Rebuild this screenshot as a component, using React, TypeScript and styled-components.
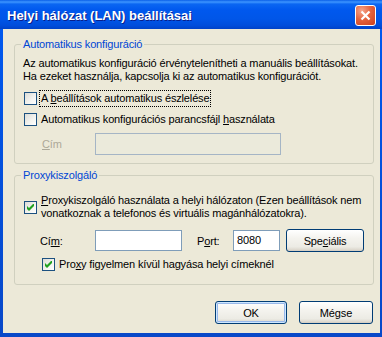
import styled, { createGlobalStyle } from 'styled-components';

const GlobalStyle = createGlobalStyle`
  html, body {
    margin: 0;
    padding: 0;
    background: #ffffff;
  }
  body {
    font-family: 'Liberation Sans', Arial, sans-serif;
    font-size: 11px;
    letter-spacing: -0.15px;
    color: #000000;
  }
`;

const Window = styled.div`
  width: 382px;
  height: 337px;
  display: flex;
  flex-direction: column;
  background: #0a4fd9;
`;

const TitleBar = styled.div`
  height: 29px;
  flex: none;
  display: flex;
  align-items: center;
  justify-content: space-between;
  padding: 0 6px 0 7px;
  box-sizing: border-box;
  background: linear-gradient(
    to bottom,
    #0a5fe8 0%,
    #3d95ff 7%,
    #0a66f2 14%,
    #0058ee 35%,
    #0056e8 65%,
    #004ddb 88%,
    #0042c8 100%
  );
`;

const Title = styled.span`
  font-family: 'Liberation Sans', Arial, sans-serif;
  font-weight: 700;
  font-size: 13px;
  letter-spacing: 0;
  color: #ffffff;
  text-shadow: 1px 1px 0 #0a1e8a;
  margin-top: 1px;
`;

const CloseButton = styled.div`
  width: 21px;
  height: 21px;
  box-sizing: border-box;
  border: 1px solid #ffffff;
  border-radius: 3px;
  background: radial-gradient(
    circle at 30% 25%,
    #f6a58c 0%,
    #e5643f 45%,
    #cc3f1c 100%
  );
  display: flex;
  align-items: center;
  justify-content: center;
  margin-top: 1px;
`;

const Frame = styled.div`
  flex: 1;
  display: flex;
  padding: 0 2px 4px 3px;
  background: linear-gradient(to bottom, #0058ee, #0848c8);
`;

const Client = styled.div`
  flex: 1;
  background: #ece9d8;
  padding: 9px 6px 0 11px;
  display: flex;
  flex-direction: column;
`;

const Group = styled.fieldset<{ $bottom: number; $top: number }>`
  margin: ${(p) => p.$top}px 0 0 0;
  padding: 0 0 ${(p) => p.$bottom}px 0;
  border: 1px solid #d0d0bf;
  border-radius: 3px;
  min-width: 0;
`;

const Legend = styled.legend`
  margin-left: 6px;
  padding: 0 2px;
  color: #0046d5;
  line-height: 13px;
`;

const Paragraph = styled.div`
  margin: 6px 0 0 8px;
  line-height: 13px;
  white-space: nowrap;
`;

const CheckRow = styled.div<{ $top: number; $left: number; $height: number }>`
  display: flex;
  align-items: center;
  gap: 3px;
  margin: ${(p) => p.$top}px 0 0 ${(p) => p.$left}px;
  height: ${(p) => p.$height}px;
`;

const Box = styled.span`
  width: 13px;
  height: 13px;
  flex: none;
  box-sizing: border-box;
  border: 1px solid #1c5180;
  background: linear-gradient(135deg, #dcdcd7 0%, #f4f4f0 60%, #ffffff 100%);
  display: flex;
  align-items: center;
  justify-content: center;
`;

const CheckText = styled.span<{ $focus?: boolean }>`
  line-height: 13px;
  white-space: nowrap;
  padding: 1px;
  border: 1px dotted ${(p) => (p.$focus ? '#000000' : 'transparent')};
  margin-left: -1px;
`;

const FieldRow = styled.div<{ $top: number; $left: number }>`
  display: flex;
  align-items: center;
  margin: ${(p) => p.$top}px 0 0 ${(p) => p.$left}px;
`;

const Label = styled.span<{ $width: number; $disabled?: boolean; $gap?: number }>`
  width: ${(p) => p.$width}px;
  margin-left: ${(p) => p.$gap ?? 0}px;
  flex: none;
  white-space: nowrap;
  color: ${(p) => (p.$disabled ? '#aca899' : '#000000')};
`;

const TextField = styled.div<{ $width: number; $height: number; $disabled?: boolean }>`
  width: ${(p) => p.$width}px;
  height: ${(p) => p.$height}px;
  flex: none;
  box-sizing: border-box;
  border: 1px solid ${(p) => (p.$disabled ? '#a5b5c5' : '#7f9db9')};
  background: ${(p) => (p.$disabled ? '#ebeadb' : '#ffffff')};
  padding: 3px 0 0 3px;
  line-height: 13px;
`;

const Button = styled.div<{ $width: number; $default?: boolean; $gap?: number }>`
  width: ${(p) => p.$width}px;
  height: 23px;
  margin-left: ${(p) => p.$gap ?? 0}px;
  flex: none;
  box-sizing: border-box;
  border: 1px solid #003c74;
  border-radius: 3px;
  background: linear-gradient(to bottom, #ffffff 0%, #f4f3ee 40%, #ecebe4 80%, #d6d0c5 100%);
  box-shadow: ${(p) =>
    p.$default
      ? 'inset 0 0 0 1px #cee7ff, inset 0 0 0 2px #98b8ea'
      : 'inset 0 -1px 0 0 #d6d0c5'};
  display: flex;
  align-items: center;
  justify-content: center;
  white-space: nowrap;
`;

const Buttons = styled.div`
  display: flex;
  justify-content: flex-end;
  gap: 12px;
  margin-top: 16px;
  padding-right: 1px;
`;

const Check = ({ checked }: { checked?: boolean }) => (
  <Box>
    {checked && (
      <svg width="7" height="7" viewBox="0 0 7 7">
        <path d="M0 2 L2 4 L6 0 L7 0 L7 2 L2 7 L0 5 Z" fill="#21a121" />
      </svg>
    )}
  </Box>
);

const App = () => (
  <>
    <GlobalStyle />
    <Window>
      <TitleBar>
        <Title>Helyi hálózat (LAN) beállításai</Title>
        <CloseButton>
          <svg width="11" height="11" viewBox="0 0 11 11">
            <path d="M1.5 1.5 L9.5 9.5 M9.5 1.5 L1.5 9.5" stroke="#ffffff" strokeWidth="2.2" />
          </svg>
        </CloseButton>
      </TitleBar>
      <Frame>
        <Client>
          <Group $top={0} $bottom={8}>
            <Legend>Automatikus konfiguráció</Legend>
            <Paragraph>
              Az automatikus konfiguráció érvénytelenítheti a manuális beállításokat.
              <br />
              Ha ezeket használja, kapcsolja ki az automatikus konfigurációt.
            </Paragraph>
            <CheckRow $top={5} $left={9} $height={21}>
              <Check />
              <CheckText $focus>
                A <u>b</u>eállítások automatikus észlelése
              </CheckText>
            </CheckRow>
            <CheckRow $top={0} $left={9} $height={21}>
              <Check />
              <CheckText>
                Automatikus konfigurációs parancsfájl <u>h</u>asználata
              </CheckText>
            </CheckRow>
            <FieldRow $top={3} $left={27}>
              <Label $width={53} $disabled>
                <u>C</u>ím
              </Label>
              <TextField $width={186} $height={22} $disabled />
            </FieldRow>
          </Group>
          <Group $top={5} $bottom={11}>
            <Legend>Proxykiszolgáló</Legend>
            <CheckRow $top={12} $left={9} $height={26}>
              <Check checked />
              <CheckText>
                <u>P</u>roxykiszolgáló használata a helyi hálózaton (Ezen beállítások nem
                <br />
                vonatkoznak a telefonos és virtuális magánhálózatokra).
              </CheckText>
            </CheckRow>
            <FieldRow $top={9} $left={25}>
              <Label $width={55}>
                Cí<u>m</u>:
              </Label>
              <TextField $width={87} $height={21} />
              <Label $width={36} $gap={15}>
                P<u>o</u>rt:
              </Label>
              <TextField $width={47} $height={21}>
                8080
              </TextField>
              <Button $width={78} $gap={6}>
                Spe<u>c</u>iális
              </Button>
            </FieldRow>
            <CheckRow $top={4} $left={27} $height={17}>
              <Check checked />
              <CheckText>
                Pro<u>x</u>y figyelmen kívül hagyása helyi címeknél
              </CheckText>
            </CheckRow>
          </Group>
          <Buttons>
            <Button $width={72} $default>
              OK
            </Button>
            <Button $width={74}>Mégse</Button>
          </Buttons>
        </Client>
      </Frame>
    </Window>
  </>
);

export default App;
